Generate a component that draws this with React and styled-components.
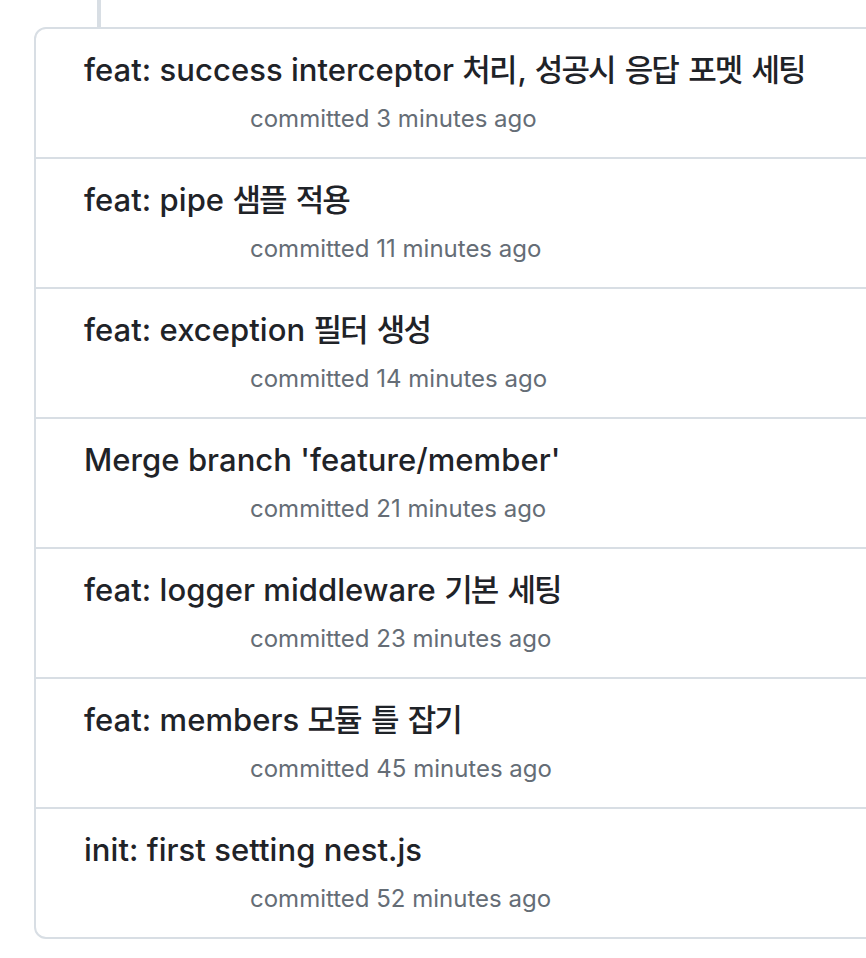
import React from 'react'
import styled, {createGlobalStyle} from 'styled-components'

const GlobalStyle = createGlobalStyle`
    html, body {
        margin: 0;
        padding: 0;
        background: #ffffff;
        overflow: hidden;
    }
    body {
        font-family: Inter, "Noto Sans CJK KR", "Noto Sans", sans-serif;
        -webkit-font-smoothing: antialiased;
    }
`

const Page = styled.div`
    width: 866px;
    height: 958px;
    overflow: hidden;
`

const TimelineStem = styled.div`
    width: 4px;
    height: 27px;
    margin-left: 97px;
    background: #d8dee4;
`

const CommitBox = styled.ol`
    list-style: none;
    margin: 0 0 0 34px;
    padding: 0;
    width: 900px;
    border: 2px solid #d8dee4;
    border-radius: 12px;
`

const CommitRow = styled.li`
    height: 107px;
    padding: 21px 0 0 48px;
    border-bottom: 2px solid #d8dee4;

    &:last-child {
        border-bottom: none;
    }
`

const Title = styled.div`
    font-size: 31px;
    font-weight: 500;
    line-height: 40px;
    color: #1f2328;
    letter-spacing: 0.05px;
    white-space: nowrap;
`

// Hangul runs are set a little tighter, like the system font in the shot
const Hangul = styled.span`
    letter-spacing: -2px;
    margin-right: 2px;
`

const Meta = styled.div`
    margin-top: 13px;
    margin-left: 166px;
    font-size: 24px;
    line-height: 32px;
    color: #656d76;
    white-space: nowrap;
`

const commits = [
    {title: 'feat: success interceptor 처리, 성공시 응답 포멧 세팅', time: '3 minutes ago'},
    {title: 'feat: pipe 샘플 적용', time: '11 minutes ago'},
    {title: 'feat: exception 필터 생성', time: '14 minutes ago'},
    {title: "Merge branch 'feature/member'", time: '21 minutes ago'},
    {title: 'feat: logger middleware 기본 세팅', time: '23 minutes ago'},
    {title: 'feat: members 모듈 틀 잡기', time: '45 minutes ago'},
    {title: 'init: first setting nest.js', time: '52 minutes ago'},
]

const splitHangul = (text) =>
    text.split(/([\uac00-\ud7a3]+)/).map((part, i) =>
        /[\uac00-\ud7a3]/.test(part) ? <Hangul key={i}>{part}</Hangul> : part
    )

const App = () => {
    return (
        <Page>
            <GlobalStyle/>
            <TimelineStem/>
            <CommitBox>
                {commits.map((c) => (
                    <CommitRow key={c.time}>
                        <Title>{splitHangul(c.title)}</Title>
                        <Meta>committed {c.time}</Meta>
                    </CommitRow>
                ))}
            </CommitBox>
        </Page>
    )
}

export default App
